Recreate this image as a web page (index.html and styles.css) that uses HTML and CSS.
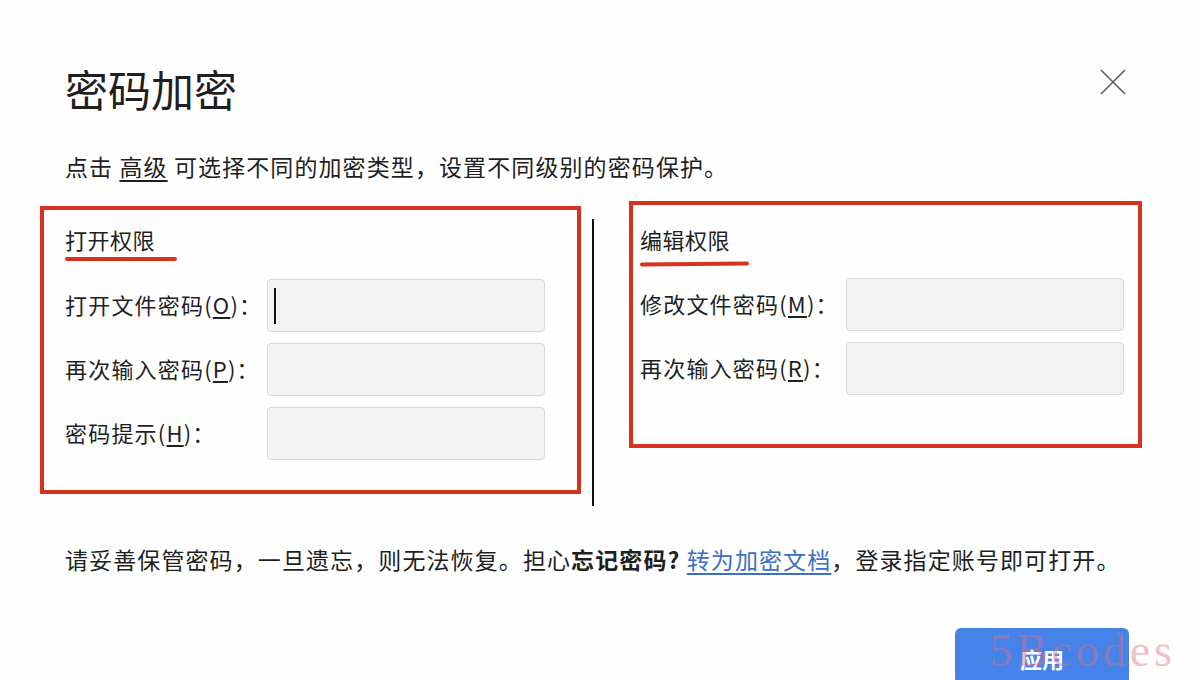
FILE: index.html
```html
<!DOCTYPE html>
<html lang="zh-CN">
<head>
    <meta charset="UTF-8">
    <meta name="viewport" content="width=device-width, initial-scale=1.0">
    <title>密码加密</title>
    <link rel="stylesheet" href="styles.css">
</head>
<body>
    <div class="dialog">
        <header class="dialog-header">
            <h1>密码加密</h1>
            <button class="close" type="button" aria-label="关闭">
                <svg width="26" height="26" viewBox="0 0 26 26">
                    <path d="M1 1 L25 25 M25 1 L1 25" stroke="#5f5f5f" stroke-width="1.6" fill="none"/>
                </svg>
            </button>
        </header>

        <p class="intro">点击 <u>高级</u> 可选择不同的加密类型，设置不同级别的密码保护。</p>

        <div class="sections">
            <section class="perm perm-open">
                <h2>打开权限</h2>
                <div class="mark"></div>
                <div class="rows">
                    <div class="row">
                        <label>打开文件密码(<u>O</u>)：</label>
                        <div class="field"><span class="caret"></span></div>
                    </div>
                    <div class="row">
                        <label>再次输入密码(<u>P</u>)：</label>
                        <div class="field"></div>
                    </div>
                    <div class="row">
                        <label>密码提示(<u>H</u>)：</label>
                        <div class="field"></div>
                    </div>
                </div>
            </section>

            <div class="divider"></div>

            <section class="perm perm-edit">
                <h2>编辑权限</h2>
                <div class="mark"></div>
                <div class="rows">
                    <div class="row">
                        <label>修改文件密码(<u>M</u>)：</label>
                        <div class="field"></div>
                    </div>
                    <div class="row">
                        <label>再次输入密码(<u>R</u>)：</label>
                        <div class="field"></div>
                    </div>
                </div>
            </section>
        </div>

        <p class="note">请妥善保管密码，一旦遗忘，则无法恢复。担心<b>忘记密码?</b> <a href="#">转为加密文档</a>，登录指定账号即可打开。</p>

        <div class="actions">
            <button class="apply" type="button">应用</button>
            <span class="watermark">5Bcodes</span>
        </div>
    </div>
</body>
</html>
```

FILE: styles.css
```css
body {
    margin: 0;
    background: #fefefe;
    color: #1f1f1f;
    font-family: "Noto Sans CJK SC", "Noto Sans", sans-serif;
    overflow: hidden;
}
.dialog {
    width: 1194px;
    height: 680px;
    padding-left: 40px;
    box-sizing: border-box;
}
.dialog-header {
    display: flex;
    justify-content: space-between;
    align-items: center;
    padding: 60px 68px 0 25px;
}
h1 {
    margin: 0;
    font-size: 43px;
    font-weight: 400;
    line-height: 56px;
}
.close {
    background: none;
    border: none;
    padding: 0;
    width: 26px;
    height: 26px;
    margin-top: -12px;
}
.intro {
    margin: 34px 0 0 25px;
    font-size: 23px;
    line-height: 32px;
    letter-spacing: 1.1px;
}
.intro u {
    text-underline-offset: 4px;
}
.sections {
    display: flex;
    align-items: flex-start;
    margin-top: 19px;
}
.perm {
    border: 4px solid #d8321f;
    box-sizing: border-box;
}
.perm-open {
    width: 541px;
    height: 288px;
    margin-top: 5px;
    padding: 14px 32px 0 21px;
}
.perm-edit {
    width: 513px;
    height: 247px;
    padding: 19px 14px 0 7px;
}
h2 {
    margin: 0;
    font-size: 22px;
    font-weight: 400;
    line-height: 30px;
    letter-spacing: 0.5px;
}
.mark {
    height: 4px;
    width: 112px;
    background: #d8321f;
    border-radius: 2px;
    margin-top: 3px;
}
.perm-edit .mark {
    width: 109px;
    margin-top: 8px;
    transform: rotate(-0.6deg);
}
.rows {
    display: flex;
    flex-direction: column;
    gap: 11px;
    margin-top: 18px;
}
.perm-edit .rows {
    margin-top: 12px;
}
.row {
    display: flex;
    align-items: center;
}
label {
    width: 202px;
    font-size: 22px;
    line-height: 30px;
    letter-spacing: 1.2px;
    white-space: nowrap;
    margin-top: -4px;
}
.perm-edit label {
    width: 206px;
}
label u {
    text-underline-offset: 3px;
}
.field {
    width: 278px;
    height: 53px;
    background: #f3f3f3;
    border: 1px solid #d9d9d9;
    border-radius: 4px;
    box-sizing: border-box;
    display: flex;
    align-items: center;
    padding-left: 6px;
}
.caret {
    width: 2px;
    height: 36px;
    background: #111;
}
.divider {
    width: 2px;
    height: 287px;
    background: #111;
    margin: 18px 35px 0 11px;
}
.note {
    margin: 37px 0 0 25px;
    font-size: 23px;
    line-height: 32px;
    letter-spacing: 1.1px;
}
.note b {
    font-weight: 700;
}
.note a {
    color: #3a6fc6;
    text-underline-offset: 4px;
}
.actions {
    position: relative;
    display: flex;
    justify-content: flex-end;
    padding-right: 65px;
    margin-top: 53px;
}
.apply {
    width: 174px;
    height: 56px;
    background: #4583e8;
    color: #fff;
    border: none;
    border-radius: 6px;
    font-family: "Noto Sans CJK SC", sans-serif;
    font-size: 22px;
    font-weight: 700;
    padding-top: 4px;
}
.watermark {
    position: absolute;
    right: 18px;
    top: -4px;
    font-family: "Liberation Serif", serif;
    font-size: 46px;
    letter-spacing: 4px;
    color: rgba(226, 110, 130, 0.45);
    pointer-events: none;
}
```
